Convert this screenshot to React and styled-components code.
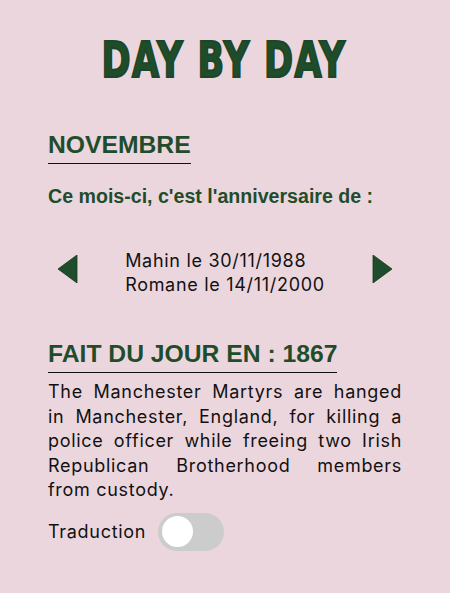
import { useState } from 'react';
import styled, { createGlobalStyle } from 'styled-components';

const GlobalStyle = createGlobalStyle`
  html, body {
    margin: 0;
    padding: 0;
    background-color: #ecd6de;
  }
  body {
    font-family: Inter, "Liberation Sans", Arial, sans-serif;
  }
`;

const Page = styled.main`
  display: flex;
  flex-direction: column;
  padding: 32px 48px 40px;
  min-height: 593px;
  box-sizing: border-box;
`;

const Title = styled.h1`
  margin: 0;
  text-align: center;
  white-space: nowrap;
  font-family: Impact, "DejaVu Sans", sans-serif;
  font-weight: bold;
  font-size: 50px;
  line-height: 56px;
  letter-spacing: 2px;
  color: #1f4d2b;
  -webkit-text-stroke: 2.2px #1c4628;
  transform: translateX(-1px) scaleX(0.7);
`;

const Heading = styled.h2`
  align-self: flex-start;
  margin: ${({ $top }) => $top} 0 0;
  padding-bottom: 4px;
  border-bottom: 1.5px solid #111;
  font-family: "Liberation Sans", Arial, sans-serif;
  font-weight: bold;
  font-size: 24.7px;
  line-height: 28px;
  color: #1f4d2b;
`;

const SubTitle = styled.p`
  margin: 21px 0 0;
  font-family: "Liberation Sans", Arial, sans-serif;
  font-weight: bold;
  font-size: 19.6px;
  color: #1f4d2b;
`;

const Carousel = styled.div`
  display: flex;
  align-items: center;
  justify-content: space-between;
  margin-top: 41px;
  padding: 0 10px;
`;

const Arrow = styled.button`
  border: none;
  background: none;
  padding: 0;
  margin-bottom: 9px;
  cursor: pointer;
  display: flex;
  svg {
    display: block;
  }
`;

const Birthdays = styled.div`
  font-size: 18px;
  line-height: 24px;
  letter-spacing: 0.7px;
  color: #111;
  text-align: left;
`;

const Fact = styled.p`
  margin: 7px 0 0;
  font-size: 18px;
  line-height: 24.5px;
  letter-spacing: 0.7px;
  text-align: justify;
  color: #111;
`;

const ToggleRow = styled.label`
  display: flex;
  align-items: center;
  gap: 12px;
  margin-top: 10px;
  font-size: 18px;
  letter-spacing: 0.7px;
  color: #111;
  cursor: pointer;
`;

const Track = styled.span`
  display: flex;
  align-items: center;
  width: 66px;
  height: 38px;
  padding: 0 4px;
  box-sizing: border-box;
  border-radius: 19px;
  background: ${({ $on }) => ($on ? '#1f4d2b' : '#cccccc')};
  justify-content: ${({ $on }) => ($on ? 'flex-end' : 'flex-start')};
`;

const Knob = styled.span`
  width: 31px;
  height: 31px;
  border-radius: 50%;
  background: #fff;
`;

const Triangle = ({ dir }) => (
  <svg width="20" height="28" viewBox="0 0 20 28">
    <polygon
      points={dir === 'left' ? '19,0 19,28 0,14' : '1,0 1,28 20,14'}
      fill="#1f4d2b"
      stroke="#143a1e"
      strokeWidth="0.8"
    />
  </svg>
);

export default function App() {
  const [on, setOn] = useState(false);

  return (
    <>
      <GlobalStyle />
      <Page>
        <Title>DAY BY DAY</Title>

        <Heading $top="43px">NOVEMBRE</Heading>
        <SubTitle>Ce mois-ci, c'est l'anniversaire de :</SubTitle>

        <Carousel>
          <Arrow aria-label="précédent"><Triangle dir="left" /></Arrow>
          <Birthdays>
            <div>Mahin le 30/11/1988</div>
            <div>Romane le 14/11/2000</div>
          </Birthdays>
          <Arrow aria-label="suivant"><Triangle dir="right" /></Arrow>
        </Carousel>

        <Heading $top="43px">FAIT DU JOUR EN : 1867</Heading>
        <Fact>
          The Manchester Martyrs are hanged in Manchester, England, for killing a
          police officer while freeing two Irish Republican Brotherhood members
          from custody.
        </Fact>

        <ToggleRow onClick={() => setOn(!on)}>
          Traduction
          <Track $on={on}><Knob /></Track>
        </ToggleRow>
      </Page>
    </>
  );
}
